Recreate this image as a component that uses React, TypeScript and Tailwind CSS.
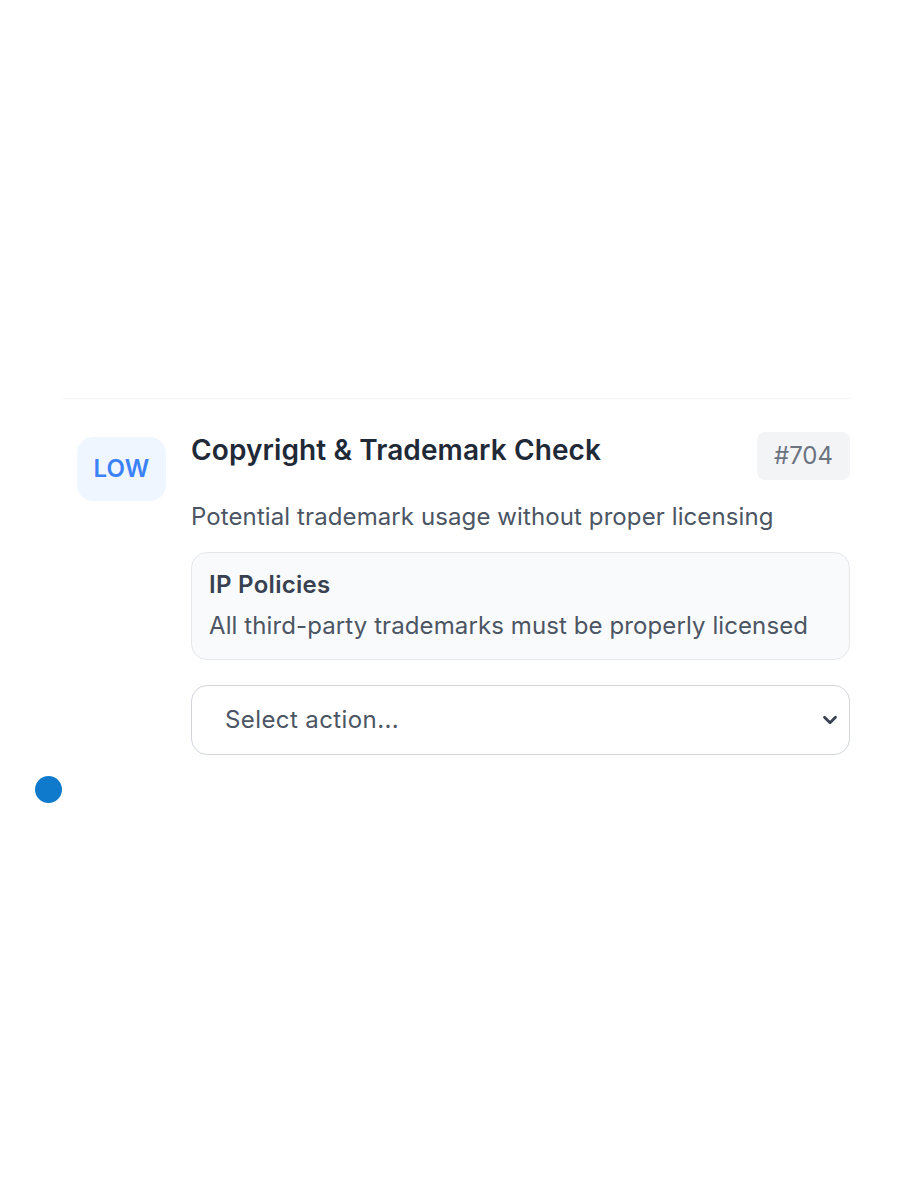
import { ChevronDown } from 'lucide-react';

export default function App() {
  return (
    <div className="min-h-[1200px] w-[900px] bg-white font-['Inter',sans-serif]">
      <div className="pt-[398px] pl-[63px] pr-[48px]">
        <div className="border-t border-gray-100" />
        <div className="flex gap-[25px] pt-[33px] pl-[14px]">
          <div className="mt-[5px] flex h-[64px] w-[89px] flex-shrink-0 items-center justify-center rounded-[16px] bg-[#eff6ff]">
            <span className="text-[24px] font-semibold tracking-[0.2px] text-[#3b82f6]">LOW</span>
          </div>
          <div className="flex-1 pr-[2px]">
            <div className="flex items-start justify-between">
              <h3 className="pt-[1px] text-[28px] font-semibold leading-[34px] tracking-[0.1px] text-[#1f2937]">
                Copyright &amp; Trademark Check
              </h3>
              <span className="rounded-[8px] bg-[#f3f4f6] px-[17px] py-[8px] text-[24px] leading-[32px] text-[#6b7280]">
                #704
              </span>
            </div>
            <p className="mt-[21px] text-[24px] leading-[32px] tracking-[0.1px] text-[#4b5563]">
              Potential trademark usage without proper licensing
            </p>
            <div className="mt-[19px] rounded-[16px] border border-[#e5e7eb] bg-[#f9fafb] px-[17px] pt-[15px] pb-[16px]">
              <div className="text-[24px] font-semibold leading-[34px] tracking-[0.3px] text-[#374151]">IP Policies</div>
              <div className="mt-[7px] text-[24px] leading-[34px] tracking-[0.1px] text-[#4b5563]">
                All third-party trademarks must be properly licensed
              </div>
            </div>
            <div className="mt-[25px] flex h-[70px] items-center justify-between rounded-[16px] border border-[#d1d5db] bg-white pl-[33px] pr-[8px]">
              <span className="text-[24px] tracking-[0.4px] text-[#4b5563]">Select action...</span>
              <ChevronDown className="h-[22px] w-[22px] text-[#374151]" strokeWidth={3} />
            </div>
          </div>
        </div>
      </div>
      <div className="ml-[35px] mt-[21px] h-[27px] w-[27px] rounded-full bg-[#0f7acb]" />
    </div>
  );
}
